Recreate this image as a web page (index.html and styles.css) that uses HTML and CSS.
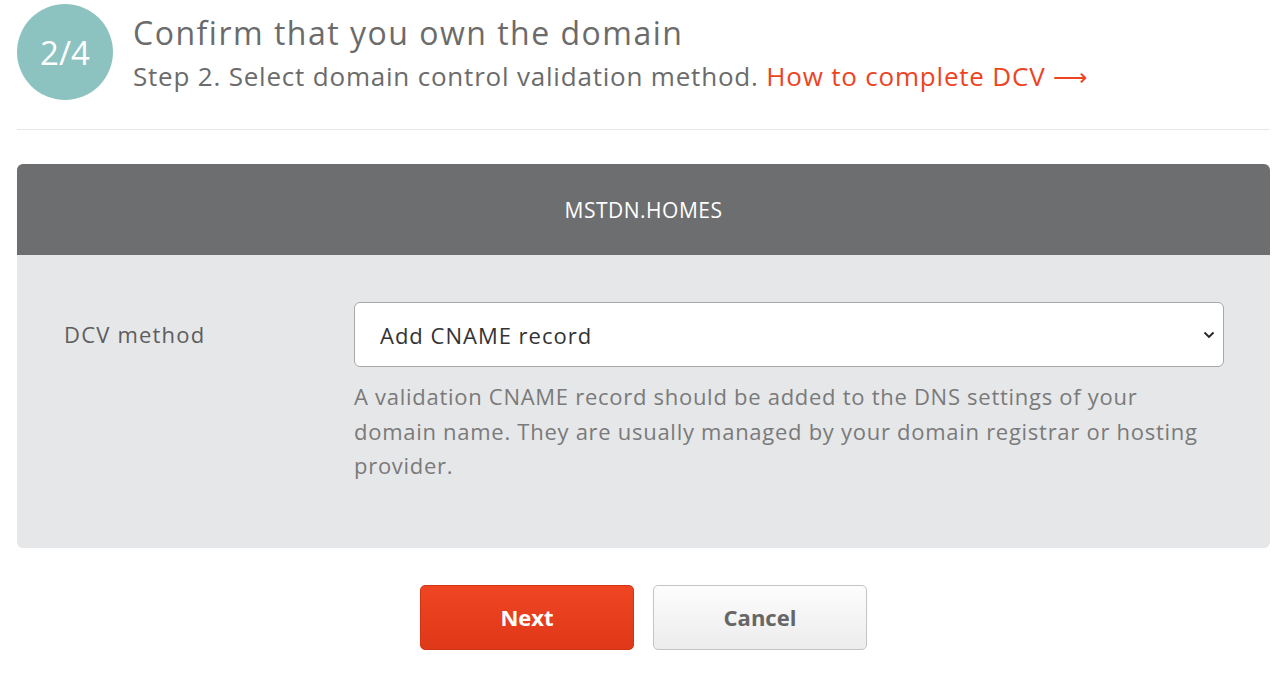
FILE: index.html
```html
<!DOCTYPE html>
<html>
<head>
<meta charset="utf-8">
<link rel="stylesheet" href="styles.css">
</head>
<body>
<div class="page">
  <header class="step-head">
    <div class="step-badge">2/4</div>
    <div class="step-text">
      <h1 class="step-title">Confirm that you own the domain</h1>
      <p class="step-sub">Step 2. Select domain control validation method. <a class="step-link" href="#">How to complete DCV <span class="arrow">⟶</span></a></p>
    </div>
  </header>
  <hr class="divider">
  <section class="card">
    <div class="card-head">MSTDN.HOMES</div>
    <div class="card-body">
      <label class="field-label">DCV method</label>
      <div class="field">
        <div class="select-wrap">
          <select class="select">
            <option>Add CNAME record</option>
          </select>
          <svg class="chevron" width="12" height="8" viewBox="0 0 12 8"><path d="M1.5 1.5 L6 6 L10.5 1.5" fill="none" stroke="#222" stroke-width="1.8"/></svg>
        </div>
        <p class="help">A validation CNAME record should be added to the DNS settings of your domain name. They are usually managed by your domain registrar or hosting provider.</p>
      </div>
    </div>
  </section>
  <div class="actions">
    <button class="btn btn-primary">Next</button>
    <button class="btn btn-default">Cancel</button>
  </div>
</div>
</body>
</html>
```
FILE: styles.css
```css
* { box-sizing: border-box; }
html, body { margin: 0; padding: 0; background: #fff; }
body { font-family: "Open Sans", "Noto Sans", sans-serif; color: #666; }
.page { padding: 4px 17px 0 17px; }
.step-head { display: flex; align-items: flex-start; gap: 20px; }
.step-badge {
  width: 96px; height: 96px; border-radius: 50%;
  background: #8cc3c1; color: #fff;
  display: flex; align-items: center; justify-content: center;
  font-size: 33px; font-weight: 400; flex: none;
}
.step-text { padding-top: 8px; }
.step-title { margin: 0; font-size: 32px; font-weight: 400; color: #6b6b6b; line-height: 42px; letter-spacing: 1.5px; }
.step-sub { margin: 5px 0 0; font-size: 26px; font-weight: 400; color: #6b6b6b; line-height: 34px; letter-spacing: 0.8px; }
.step-link { color: #ee4323; text-decoration: none; }
.arrow { font-size: 24px; }
.divider { border: 0; border-top: 1px solid #e6e6e6; margin: 29px 0 0; }
.card { margin-top: 34px; border-radius: 6px; overflow: hidden; }
.card-head {
  background: #6d6e70; color: #fff; height: 91px;
  display: flex; align-items: center; justify-content: center;
  font-size: 21px; font-weight: 500; letter-spacing: 0.5px;
}
.card-body { background: #e6e7e9; display: flex; padding: 47px 46px 65px 47px; }
.field-label { width: 290px; flex: none; font-size: 22px; color: #5e5e5e; line-height: 65px; letter-spacing: 1.2px; }
.field { flex: 1; }
.select-wrap { position: relative; }
.select {
  appearance: none; -webkit-appearance: none; width: 100%; height: 65px;
  border: 1px solid #a8a8a8; border-radius: 6px; background: #fff;
  padding: 0 25px; font-family: inherit; font-size: 22px; color: #333; letter-spacing: 1px;
}
.chevron { position: absolute; right: 9px; top: 29px; }
.help { margin: 12px 0 0; font-size: 22px; line-height: 34.5px; color: #7a7a7a; max-width: 860px; letter-spacing: 0.72px; }
.actions { display: flex; justify-content: center; gap: 19px; margin-top: 37px; }
.btn {
  width: 214px; height: 65px; border-radius: 5px; font-family: inherit;
  font-size: 22px; font-weight: 700; cursor: pointer;
}
.btn-primary { background: linear-gradient(#ef4523, #df3818); border: 1px solid #d23414; color: #fff; }
.btn-default { background: linear-gradient(#fdfdfd, #ececec); border: 1px solid #c4c4c4; color: #666; }
```
